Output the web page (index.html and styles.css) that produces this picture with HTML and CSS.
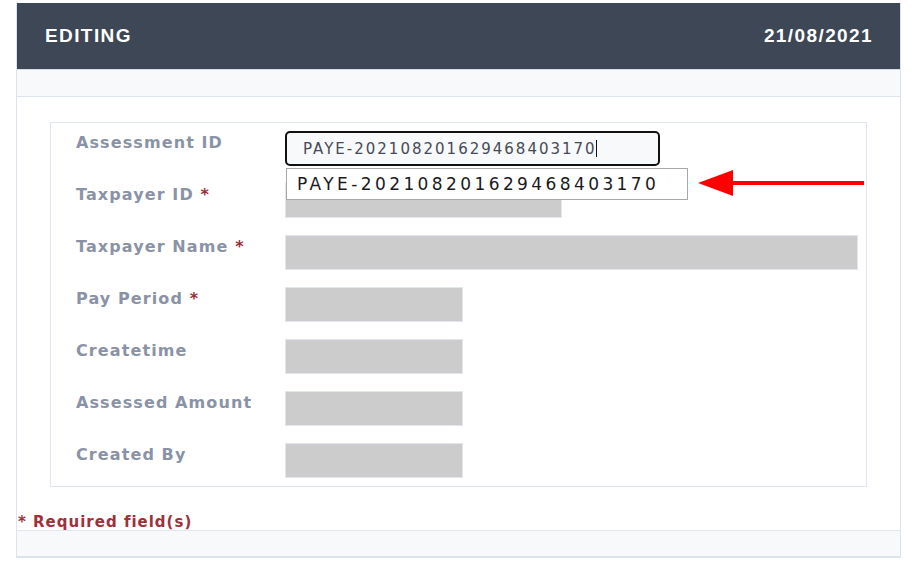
FILE: index.html
```html
<!DOCTYPE html>
<html lang="en">
<head>
<meta charset="utf-8">
<title>Editing</title>
<link rel="stylesheet" href="styles.css">
</head>
<body>
<div class="panel">
  <div class="header">
    <span class="title">EDITING</span>
    <span class="date">21/08/2021</span>
  </div>
  <div class="strip"></div>
  <div class="content">
    <div class="box">
      <div class="row">
        <div class="label">Assessment ID</div>
        <div class="control">
          <div class="field focused"><span class="val">PAYE-202108201629468403170</span><span class="caret"></span></div>
          <div class="suggest">PAYE-202108201629468403170</div>
        </div>
      </div>
      <div class="row">
        <div class="label">Taxpayer ID <span class="req">*</span></div>
        <div class="control"><div class="field gray w-id"></div></div>
      </div>
      <div class="row">
        <div class="label">Taxpayer Name <span class="req">*</span></div>
        <div class="control"><div class="field gray w-name"></div></div>
      </div>
      <div class="row">
        <div class="label">Pay Period <span class="req">*</span></div>
        <div class="control"><div class="field gray w-small"></div></div>
      </div>
      <div class="row">
        <div class="label">Createtime</div>
        <div class="control"><div class="field gray w-small"></div></div>
      </div>
      <div class="row">
        <div class="label">Assessed Amount</div>
        <div class="control"><div class="field gray w-small"></div></div>
      </div>
      <div class="row">
        <div class="label">Created By</div>
        <div class="control"><div class="field gray w-small"></div></div>
      </div>
    </div>
    <div class="required">* Required field(s)</div>
  </div>
  <div class="footer"></div>
</div>
<svg class="arrow" width="170" height="30" viewBox="0 0 170 30">
  <polygon points="2,15 37,2 37,28" fill="#ff0000"/>
  <rect x="35" y="13" width="133" height="4" fill="#ff0000"/>
</svg>
</body>
</html>
```
FILE: styles.css
```css
html, body {
  background: #ffffff;
}
body {
  margin: 0;
  padding: 3px 0 0 16px;
  font-family: "DejaVu Sans", Verdana, sans-serif;
}
.panel {
  width: 883px;
  border-left: 1px solid #dde3ec;
  border-right: 1px solid #dde3ec;
  border-bottom: 2px solid #dde3ec;
}
.header {
  height: 66px;
  background: #3d4756;
  display: flex;
  align-items: center;
  justify-content: space-between;
  padding: 0 27px 0 28px;
  font-family: "Liberation Sans", Arial, sans-serif;
  font-weight: bold;
  font-size: 19px;
  letter-spacing: 1.4px;
  color: #ffffff;
}
.strip {
  height: 26px;
  background: #f7f9fb;
  border-top: 1px solid #d5dce6;
  border-bottom: 1px solid #dfe5ee;
}
.content {
  padding-top: 25px;
}
.box {
  margin: 0 33px;
  border: 1px solid #dfe5ee;
  padding: 8px 0 8px 25px;
  display: flex;
  flex-direction: column;
  gap: 17px;
}
.row {
  display: grid;
  grid-template-columns: 209px 1fr;
  height: 35px;
}
.label {
  padding-top: 2px;
  font-size: 16px;
  line-height: 20px;
  font-weight: bold;
  letter-spacing: 1.1px;
  color: #8a93a6;
  white-space: nowrap;
}
.req {
  color: #9b2d3a;
}
.control {
  position: relative;
}
.field {
  box-sizing: border-box;
  height: 35px;
}
.gray {
  background: #cccccc;
  border: 1px solid #e2e6ed;
}
.w-id { width: 277px; }
.w-name { width: 573px; }
.w-small { width: 178px; }
.focused {
  width: 375px;
  border: 2px solid #111111;
  border-radius: 5px;
  background: #f7f9fb;
  padding-left: 16px;
  display: flex;
  align-items: center;
  font-size: 15px;
  letter-spacing: 2px;
  color: #474a57;
}
.caret {
  display: inline-block;
  width: 1px;
  height: 17px;
  background: #111111;
  margin-left: -1px;
}
.suggest {
  position: absolute;
  z-index: 5;
  left: 1px;
  top: 37px;
  box-sizing: border-box;
  width: 402px;
  height: 32px;
  border: 1px solid #a8a8a8;
  background: #ffffff;
  padding-left: 10px;
  display: flex;
  align-items: center;
  font-size: 17px;
  letter-spacing: 3.4px;
  color: #1a1a22;
  white-space: nowrap;
}
.required {
  margin-top: 27px;
  padding-left: 1px;
  font-size: 15px;
  line-height: 16px;
  font-weight: bold;
  letter-spacing: 1px;
  color: #a0303a;
}
.footer {
  height: 25px;
  background: #f7f9fb;
  border-top: 1px solid #e2e7ef;
}
.arrow {
  position: absolute;
  left: 696px;
  top: 168px;
}
```
